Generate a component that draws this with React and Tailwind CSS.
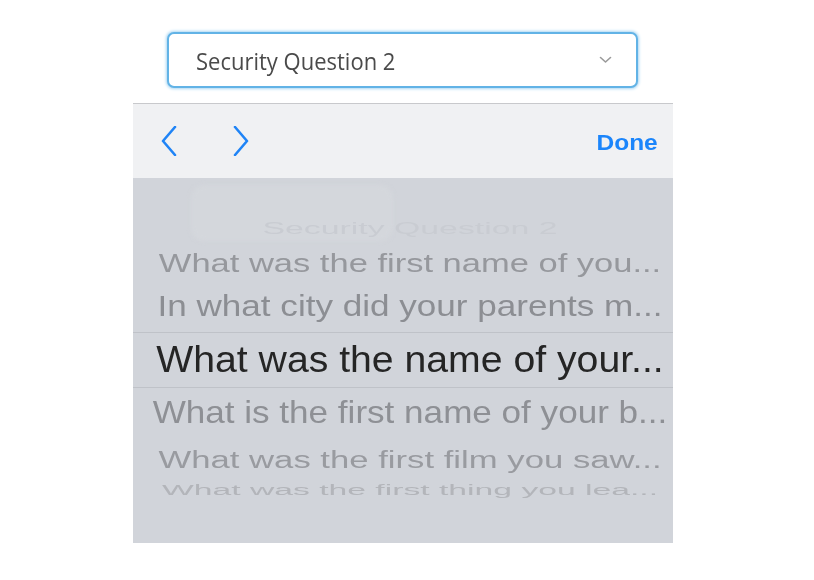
import React from 'react';

const rows = [
  { text: 'Security Question 2', box: 'h-[34px]', txt: 'text-[33.8px] scale-y-[0.5] text-[#c9ccd2]' },
  { text: 'What was the first name of you...', box: 'h-[34px]', txt: 'text-[34.5px] scale-y-[0.75] text-[#96989d]' },
  { text: 'In what city did your parents m...', box: 'h-[52px]', txt: 'text-[35.1px] scale-y-[0.85] text-[#8c8e93]' },
  { text: 'What was the name of your...', box: 'h-[56px] border-y border-[#bfc2c8]', txt: 'text-[39.2px] scale-y-[0.94] text-[#252525]' },
  { text: 'What is the first name of your b...', box: 'h-[48px]', txt: 'text-[35.1px] scale-y-[0.9] text-[#8e9095]' },
  { text: 'What was the first film you saw...', box: 'h-[46px]', txt: 'text-[34.7px] scale-y-[0.7] text-[#999ba0]' },
  { text: 'What was the first thing you lea...', box: 'h-[16px]', txt: 'text-[33.7px] scale-y-[0.46] text-[#b3b5ba]' },
];

function Chevron({ dir }) {
  const d = dir === 'left' ? 'M14 1 L2 15 L14 29' : 'M2 1 L14 15 L2 29';
  return (
    <svg width="16" height="30" viewBox="0 0 16 30" fill="none">
      <path d={d} stroke="#1f84f6" strokeWidth="2.6" strokeLinecap="round" strokeLinejoin="round" />
    </svg>
  );
}

export default function App() {
  return (
    <div className="min-h-[580px] w-[814px] bg-white" style={{ fontFamily: '"Liberation Sans", Arial, sans-serif' }}>
      <div className="ml-[133px] w-[540px] pt-[32px]">
        {/* select field */}
        <div className="ml-[34px] flex h-[56px] w-[471px] items-center justify-between rounded-[7px] border-2 border-[#62b3e6] bg-white pl-[27px] pr-[24px] shadow-[0_0_3px_1px_#a9d6f3]">
          <span className="text-[22px] leading-none text-[#4a4a4a] scale-y-[1.08]" style={{ fontFamily: '"Open Sans", sans-serif' }}>
            Security Question 2
          </span>
          <svg width="13" height="8" viewBox="0 0 13 8" fill="none">
            <path d="M1.5 1.5 L6.5 6 L11.5 1.5" stroke="#9a9a9a" strokeWidth="1.6" strokeLinecap="round" strokeLinejoin="round" />
          </svg>
        </div>

        {/* keyboard panel */}
        <div className="mt-[15px] border-t border-[#c8c9cc]">
          <div className="flex h-[74px] items-center bg-[#f0f1f3] pl-[28px] pr-[15px]">
            <Chevron dir="left" />
            <div className="ml-[56px]">
              <Chevron dir="right" />
            </div>
            <span className="ml-auto origin-right scale-x-[1.14] pt-[5px] text-[21.5px] font-bold text-[#1b85fb]">Done</span>
          </div>

          <div className="relative flex h-[365px] flex-col overflow-hidden bg-[#d1d4da] pt-[34px]">
            <div className="absolute left-[58px] top-[7px] h-[56px] w-[202px] rounded-[14px] bg-[#d4d7dc] blur-[2px]" />
            {rows.map((r, i) => (
              <div key={i} className={`relative flex items-center justify-center pl-[14px] ${r.box}`}>
                <span className={`whitespace-nowrap leading-none blur-[0.4px] ${r.txt}`}>{r.text}</span>
              </div>
            ))}
          </div>
        </div>
      </div>
    </div>
  );
}
